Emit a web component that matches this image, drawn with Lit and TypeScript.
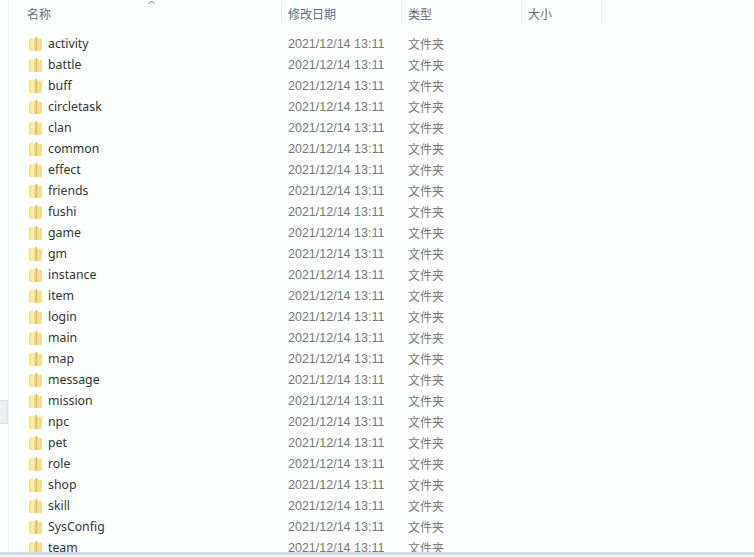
import { LitElement, html, css } from "lit";
import { customElement } from "lit/decorators.js";

const NAMES = ["activity","battle","buff","circletask","clan","common","effect","friends","fushi","game","gm","instance","item","login","main","map","message","mission","npc","pet","role","shop","skill","SysConfig","team"];

@customElement("app-root")
export class AppRoot extends LitElement {
  static styles = css`
    :host { display: block; width: 754px; height: 557px; overflow: hidden; position: relative; background: #fdfefe; font-family: "Noto Sans CJK SC", "Liberation Sans", sans-serif; }
    .frame { display: flex; height: 557px; flex-direction: column; }
    .main { flex: 1; min-height: 0; display: flex; overflow: hidden; }
    .rail { width: 8px; flex: none; }
    .nav-edge { width: 8px; height: 24px; margin-top: 400px; background: #eceef0; border: 1px solid #dfe3e6; border-left: 0; box-sizing: border-box; }
    .pane { flex: 1; min-width: 0; padding-left: 12px; border-left: 1px solid #eef3f6; }
    .head { display: grid; grid-template-columns: 261px 120px 120px 80px; height: 27px; color: #5a6b80; font-size: 12px; position: relative; }
    .hc { padding-left: 6px; line-height: 28px; border-right: 1px solid #e6edf3; box-sizing: border-box; height: 23px; }
    .sort { position: absolute; left: 127px; top: 0; }
    .rows { padding-top: 6px; }
    .row { display: grid; grid-template-columns: 261px 120px 120px; height: 21px; align-items: center; }
    .name { display: flex; align-items: center; gap: 5px; padding-left: 7px; font-family: "Noto Sans", "Liberation Sans", sans-serif; font-size: 12.3px; color: #333; }
    .label { padding-bottom: 1px; }
    .date { padding-left: 6px; font-family: "Liberation Sans", sans-serif; font-size: 12.5px; color: #777; }
    .type { padding-left: 6px; font-size: 12px; color: #777; }
    svg.folder { width: 15px; height: 16px; flex: none; }
    .bottom { height: 5px; flex: none; background: #eaf3fa; border-top: 3px solid #d3dde4; box-sizing: border-box; }
  `;

  folder() {
    return html`<svg class="folder" viewBox="0 0 15 16">
      <defs>
        <linearGradient id="fl" x1="0" x2="1" y1="0" y2="0">
          <stop offset="0" stop-color="#f3dc85"/><stop offset=".6" stop-color="#fbf1bd"/><stop offset="1" stop-color="#ecd27a"/>
        </linearGradient>
      </defs>
      <path d="M1 3 L4 1.5 L7.5 2.5 V15 H2 L1 14 Z" fill="url(#fl)"/>
      <path d="M7.5 0.5 L9.5 1.8 V15 H7.5 Z" fill="#d8b95c"/>
      <path d="M9.5 3 L14 2.8 V14 L13 15 H9.5 Z" fill="#f6df85"/>
    </svg>`;
  }

  render() {
    return html`<div class="frame">
      <div class="main">
        <div class="rail"><div class="nav-edge"></div></div>
        <div class="pane">
          <div class="head">
            <svg class="sort" width="7" height="5" viewBox="0 0 7 5"><path d="M0.5 4 L3.5 1 L6.5 4" fill="none" stroke="#6f8197"/></svg>
            <div class="hc">名称</div><div class="hc">修改日期</div><div class="hc">类型</div><div class="hc">大小</div>
          </div>
          <div class="rows">
            ${NAMES.map((n) => html`<div class="row">
              <div class="name">${this.folder()}<span class="label">${n}</span></div>
              <div class="date">2021/12/14 13:11</div>
              <div class="type">文件夹</div>
            </div>`)}
          </div>
        </div>
      </div>
      <div class="bottom"></div>
    </div>`;
  }
}
